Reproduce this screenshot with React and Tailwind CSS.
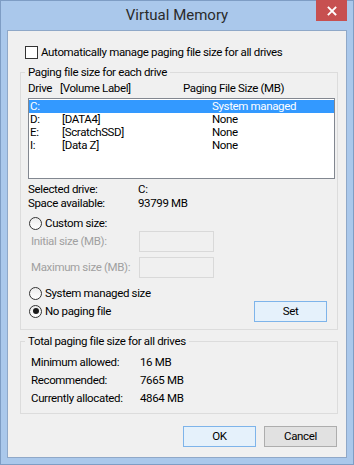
import React from 'react';

const drives = [
  { drive: 'C:', label: '', size: 'System managed', selected: true },
  { drive: 'D:', label: '[DATA4]', size: 'None' },
  { drive: 'E:', label: '[ScratchSSD]', size: 'None' },
  { drive: 'I:', label: '[Data Z]', size: 'None' },
];

const totals = [
  ['Minimum allowed:', '16 MB'],
  ['Recommended:', '7665 MB'],
  ['Currently allocated:', '4864 MB'],
];

const Radio = ({ checked, label }) => (
  <div className="flex items-center h-[16px] leading-[16px] whitespace-nowrap">
    <span className="w-[13px] h-[13px] rounded-full border border-[#333333] bg-gradient-to-b from-[#ececec] to-white flex items-center justify-center">
      {checked && <span className="w-[6px] h-[6px] rounded-full bg-[#1a1a1a]" />}
    </span>
    <span className="ml-[3px]">{label}</span>
  </div>
);

const Button = ({ children, accent, className = '' }) => (
  <button
    className={`h-[21px] w-[73px] border leading-[19px] text-black ${
      accent ? 'border-[#7eb4ea] bg-[#e5f1fb]' : 'border-[#adadad] bg-[#e1e1e1]'
    } ${className}`}
  >
    {children}
  </button>
);

const App = () => {
  return (
    <div
      className="w-[354px] h-[465px] bg-[#aac8eb] border border-[#7e9dc4] flex flex-col text-[11.5px] text-black tracking-[-0.35px] whitespace-nowrap"
      style={{ fontFamily: 'Roboto, "Noto Sans", sans-serif' }}
    >
      {/* Title bar */}
      <div className="relative h-[29px] flex items-center justify-center">
        <span className="text-[15px] text-[#2b2b2b] leading-[20px] -mt-[1px] tracking-normal">Virtual Memory</span>
        <div className="absolute top-[-1px] right-[6px] w-[31px] h-[21px] bg-[#c75050] flex items-center justify-center">
          <svg width="10" height="10" viewBox="0 0 10 10">
            <path d="M1.5 1.5 L8.5 8.5 M8.5 1.5 L1.5 8.5" stroke="white" strokeWidth="1.8" strokeLinecap="square" />
          </svg>
        </div>
      </div>

      {/* Client area */}
      <div className="mx-[6px] h-[428px] bg-[#f0f0f0] border border-[#8fa8c8] flex flex-col">
        <div className="flex items-center h-[16px] leading-[16px] ml-[17px] mt-[13px]">
          <span className="w-[13px] h-[13px] border border-[#333333] bg-white" />
          <span className="ml-[3px]">Automatically manage paging file size for all drives</span>
        </div>

        {/* Group 1 */}
        <fieldset className="ml-[12px] w-[318px] mt-[4px] border border-[#dcdcdc] pl-[4px] pr-[1px] pb-[7px]">
          <legend className="px-[3px] leading-[16px]">Paging file size for each drive</legend>
          <div className="ml-[3px]">
            <div className="flex h-[16px] leading-[16px]">
              <span className="w-[32px]">Drive</span>
              <span className="w-[123px]">[Volume Label]</span>
              <span>Paging File Size (MB)</span>
            </div>
            <div className="mt-[2px] h-[81px] w-[307px] border border-[#828790] bg-white pt-[1px]">
              {drives.map((d) => (
                <div
                  key={d.drive}
                  className={`flex h-[13px] leading-[13px] pl-[1px] ${d.selected ? 'bg-[#3399ff] text-white' : ''}`}
                >
                  <span className="w-[32px]">{d.drive}</span>
                  <span className="w-[150px]">{d.label}</span>
                  <span>{d.size}</span>
                </div>
              ))}
            </div>

            <div className="mt-[3px] flex leading-[14px]">
              <span className="w-[110px]">Selected drive:</span>
              <span>C:</span>
            </div>
            <div className="flex leading-[14px]">
              <span className="w-[110px]">Space available:</span>
              <span>93799 MB</span>
            </div>

            <div className="mt-[5px] ml-[1px]">
              <Radio label="Custom size:" />
            </div>
            <div className="flex items-center h-[21px] text-[#a0a0a0]">
              <span className="w-[111px] pl-[3px]">Initial size (MB):</span>
              <span className="w-[75px] h-[21px] border border-[#d9d9d9]" />
            </div>
            <div className="mt-[5px] flex items-center h-[21px] text-[#a0a0a0]">
              <span className="w-[111px] pl-[3px]">Maximum size (MB):</span>
              <span className="w-[75px] h-[21px] border border-[#d9d9d9]" />
            </div>

            <div className="mt-[7px] flex items-start">
              <div className="ml-[1px] flex flex-col gap-[2px]">
                <Radio label="System managed size" />
                <Radio checked label="No paging file" />
              </div>
              <Button accent className="ml-auto mr-[9px] mt-[16px]">Set</Button>
            </div>
          </div>
        </fieldset>

        {/* Group 2 */}
        <fieldset className="ml-[12px] w-[318px] mt-[3px] border border-[#dcdcdc] pl-[4px] pb-[6px]">
          <legend className="px-[3px] leading-[16px]">Total paging file size for all drives</legend>
          <div className="ml-[6px] mt-[4px]">
            {totals.map(([label, value]) => (
              <div key={label} className="flex h-[18px] leading-[18px]">
                <span className="w-[109px]">{label}</span>
                <span>{value}</span>
              </div>
            ))}
          </div>
        </fieldset>

        <div className="mt-[12px] flex justify-end gap-[8px] pr-[9px]">
          <Button accent className="bg-[#e1e1e1]">OK</Button>
          <Button>Cancel</Button>
        </div>
      </div>
    </div>
  );
};

export default App;
